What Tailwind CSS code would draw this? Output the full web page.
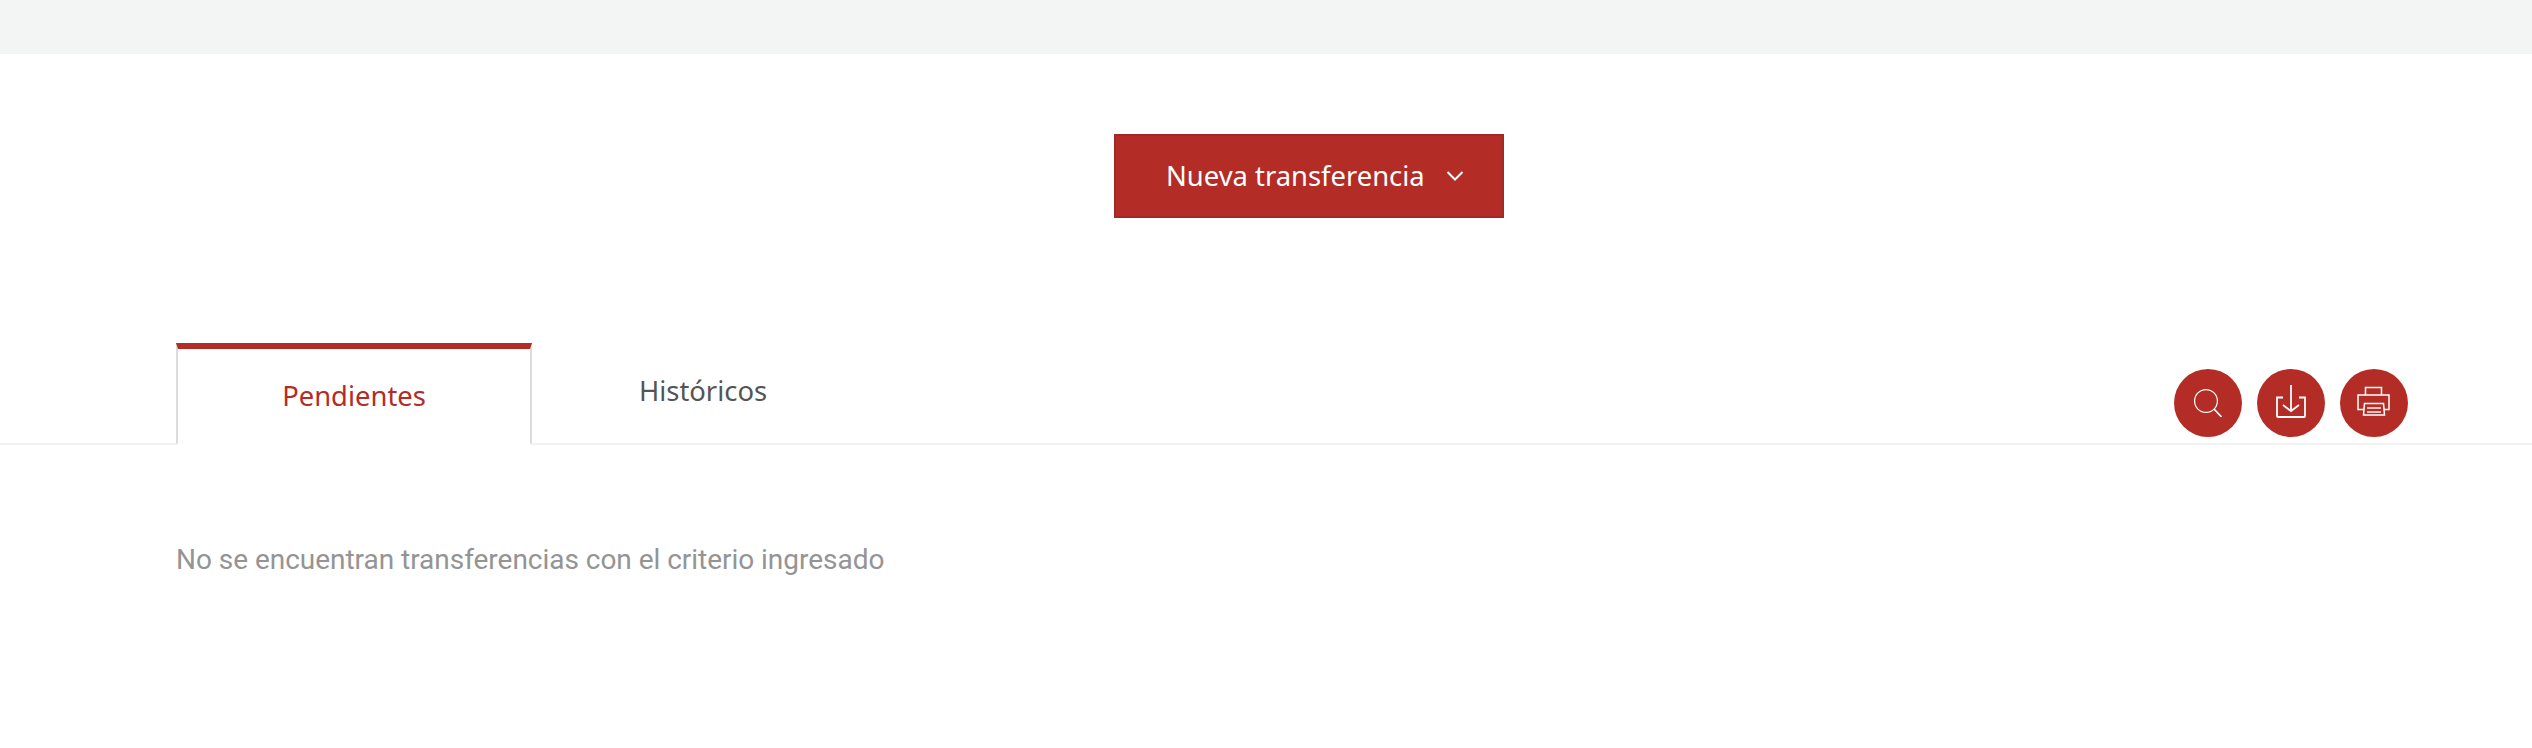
<!DOCTYPE html>
<html lang="es">
<head>
<meta charset="utf-8">
<script src="https://cdn.jsdelivr.net/npm/@tailwindcss/browser@4"></script>
</head>
<body class="bg-white overflow-hidden">
<div class="w-[2532px] h-[748px] flex flex-col bg-white">
  <div class="h-[54px] bg-[#f3f5f4]"></div>
  <div class="pt-[80px] pl-[1114px]">
    <button class="w-[390px] h-[84px] flex items-center pl-[50px] bg-[#b32d26] border-2 border-[#a32a24] text-white text-[27.4px] font-['Noto_Sans',sans-serif]">
      <span>Nueva transferencia</span>
      <svg class="ml-[21px]" width="18" height="12" viewBox="0 0 18 12" fill="none" stroke="white" stroke-width="2"><path d="M1.5 2 L9 9.5 L16.5 2"/></svg>
    </button>
  </div>
  <div class="mt-[125px] h-[102px] border-b-2 border-[#f2f2f2] pl-[176px] pr-[124px] flex items-start">
    <div class="w-[356px] h-[102px] -mb-[2px] bg-white border-x-2 border-[#dcdcdc] border-t-[6px] border-t-[#b32d26] border-b-2 border-b-white flex items-center justify-center text-[#b32d26] text-[27.4px] font-['Noto_Sans',sans-serif]">Pendientes</div>
    <div class="w-[342px] h-[96px] flex items-center justify-center text-[#555555] text-[27.4px] font-['Noto_Sans',sans-serif]">Históricos</div>
    <div class="ml-auto mt-[26px] flex gap-[15px]">
      <div class="w-[68px] h-[68px] rounded-full bg-[#b32d26] flex items-center justify-center">
        <svg width="28" height="28" viewBox="0 0 28 28" fill="none" stroke="white" stroke-width="1.2"><circle cx="12" cy="12" r="11.4"/><path d="M20 20 L27.5 28" stroke-width="1.6"/></svg>
      </div>
      <div class="w-[68px] h-[68px] rounded-full bg-[#b32d26] flex items-center justify-center">
        <svg width="32" height="36" viewBox="0 0 32 36" fill="none" stroke="white" stroke-width="1.8"><path d="M8 12.5 H2 V31 Q2 32 3 32 H29 Q30 32 30 31 V12.5 H24"/><path d="M16 0 V26"/><path d="M8 20 L16 26 L24 20"/></svg>
      </div>
      <div class="w-[68px] h-[68px] rounded-full bg-[#b32d26] flex items-center justify-center">
        <svg width="36" height="34" viewBox="0 0 36 34" fill="none" stroke="white" stroke-width="1.5"><path d="M9.5 9 V1.5 H25.5 V9"/><path d="M8 23.5 H2 V9 H33 V23.5 H28"/><path d="M7.5 29 L8.5 17.5 H27.5 L28.5 29 Z" fill="#b32d26"/><path d="M11 22 H25 M11 26 H25" stroke-width="2" stroke-opacity="0.7"/></svg>
      </div>
    </div>
  </div>
  <p class="mt-[96px] pl-[176px] text-[28px] leading-[38px] tracking-[-0.03px] text-[#949494] font-['Roboto',sans-serif]">No se encuentran transferencias con el criterio ingresado</p>
</div>
</body>
</html>
